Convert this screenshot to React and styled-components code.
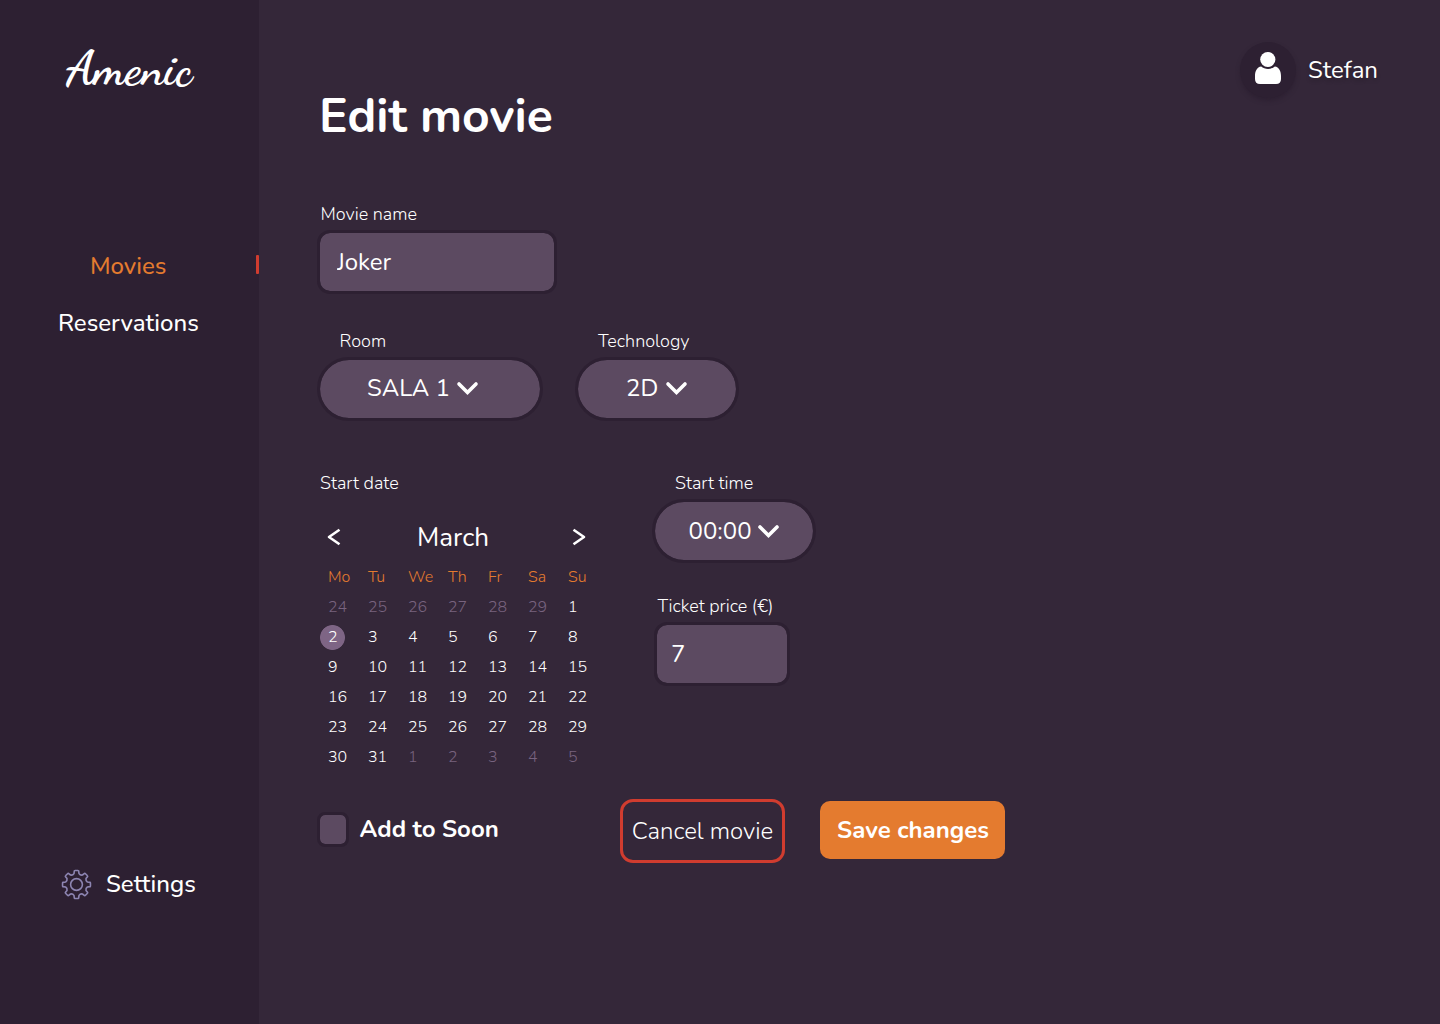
import React, { useState } from "react";
import styled, { createGlobalStyle } from "styled-components";

const colors = {
  background: "#342739",
  dark: "#2D2032",
  field: "#5C4A61",
  muted: "#78637F",
  selected: "#7E6585",
  orange: "#E47B2F",
  red: "#D03C2F",
  gear: "#8D85B2",
};

const GlobalStyle = createGlobalStyle`
  * { box-sizing: border-box; }
  body {
    margin: 0;
    background: ${colors.background};
    color: #fff;
    font-family: Nunito, Lato, "Open Sans", sans-serif;
  }
  button, input { font: inherit; color: inherit; }
`;

const Page = styled.div`
  display: grid;
  grid-template-columns: 259px 1fr;
  width: 1440px;
  height: 1024px;
  overflow: hidden;
`;

const Sidebar = styled.aside`
  display: flex;
  flex-direction: column;
  background: ${colors.dark};
`;

const Logo = styled.div`
  height: 58px;
  margin: 40px 0 0 66px;
  font: 700 48px/58px "Dancing Script", cursive;
  white-space: nowrap;
`;

const Nav = styled.nav`
  display: flex;
  flex-direction: column;
  gap: 25px;
  margin-top: 152px;
`;

const NavItem = styled.a`
  display: flex;
  align-items: center;
  justify-content: space-between;
  height: 32px;
  padding-left: ${(p) => p.$indent}px;
  color: ${(p) => (p.$active ? colors.orange : "#fff")};
  font-size: 24px;
  font-weight: 550;
  line-height: 32px;
`;

const ActiveMark = styled.i`
  width: 3px;
  height: 19px;
  margin-top: -3px;
  border-radius: 1px;
  background: ${colors.red};
`;

const SettingsLink = styled.a`
  display: flex;
  align-items: center;
  gap: 14px;
  height: 32px;
  margin: auto 0 124px 61px;
  font-size: 24px;
  font-weight: 550;
  line-height: 32px;
`;

const Main = styled.main`
  display: flex;
  flex-direction: column;
  padding: 42px 62px 0 58px;
`;

const Header = styled.header`
  display: flex;
  justify-content: space-between;
  align-items: flex-start;
  height: 107px;
  margin-bottom: 53px;
`;

const Title = styled.h1`
  margin: 41px 0 0 2px;
  font-size: 48px;
  font-weight: 700;
  line-height: 66px;
`;

const User = styled.div`
  display: flex;
  align-items: center;
  gap: 12px;
  height: 56px;
  font-size: 24px;
  line-height: 32px;
  text-shadow: 0 3px 4px rgba(0, 0, 0, 0.2);
`;

const Avatar = styled.div`
  display: flex;
  justify-content: center;
  width: 56px;
  height: 56px;
  padding-top: 9px;
  border-radius: 50%;
  background: ${colors.dark};
  box-shadow: 0 3px 4px ${colors.dark};
`;

const Row = styled.div`
  display: flex;
  align-items: flex-start;
  gap: ${(p) => p.$gap || 0}px;
  margin-bottom: ${(p) => p.$below || 0}px;
`;

const Field = styled.label`
  display: flex;
  flex-direction: column;
  gap: 4px;
  margin-left: ${(p) => p.$indent || 0}px;
`;

const Label = styled.span`
  padding-left: ${(p) => p.$indent}px;
  font-size: 18px;
  font-weight: 300;
  line-height: 24px;
`;

const Input = styled.input`
  width: ${(p) => p.$width}px;
  height: 64px;
  padding: 0 0 0 ${(p) => p.$inset}px;
  border: 3px solid ${colors.dark};
  border-radius: 13px;
  outline: none;
  background: ${colors.field};
  background-clip: padding-box;
  font-size: 24px;
`;

const Select = styled.button`
  display: flex;
  align-items: center;
  gap: ${(p) => p.$gap}px;
  width: ${(p) => p.$width}px;
  height: 64px;
  padding: 0 0 ${(p) => p.$lift || 0}px ${(p) => p.$inset}px;
  border: 3px solid ${colors.dark};
  border-radius: 32px;
  background: ${colors.field};
  background-clip: padding-box;
  font-size: 24px;
  line-height: 32px;
`;

const Schedule = styled.section`
  display: grid;
  grid-template-columns: 335px 1fr;
  height: 328px;
`;

const Calendar = styled.div`
  width: 280px;
  margin-left: 3px;
`;

const MonthBar = styled.div`
  display: flex;
  align-items: center;
  justify-content: space-between;
  width: 259px;
  height: 36px;
  margin: 24px 0 7px 7px;
`;

const Month = styled.span`
  padding: 2px 7px 0 0;
  font-size: 26px;
  line-height: 36px;
`;

const Days = styled.div`
  display: grid;
  grid-template-columns: repeat(7, 40px);
  grid-auto-rows: 30px;
`;

const Day = styled.span`
  width: 40px;
  padding-left: 8px;
  color: ${(p) => p.$color};
  font-size: 16px;
  font-weight: 300;
  line-height: 30px;
  background: ${(p) =>
    p.$selected
      ? `radial-gradient(circle 12.5px at 12.5px 15.5px, ${colors.selected} 12px, transparent 12.8px)`
      : "none"};
`;

const TimeColumn = styled.div`
  display: flex;
  flex-direction: column;
  gap: 31px;
`;

const Actions = styled.footer`
  display: flex;
  align-items: flex-start;
  height: 64px;
`;

const CheckLabel = styled.label`
  display: flex;
  align-items: flex-start;
  gap: 10.5px;
  width: 303px;
  height: 35px;
  margin-top: 13px;
  font-size: 24px;
  font-weight: 700;
  line-height: 34px;
`;

const Checkbox = styled.input`
  appearance: none;
  width: 32px;
  height: 35px;
  margin: 0;
  border: 3px solid ${colors.dark};
  border-radius: 8px;
  background: ${colors.field};
  background-clip: padding-box;
`;

const Button = styled.button`
  display: flex;
  align-items: center;
  justify-content: center;
  width: ${(p) => (p.$primary ? 185 : 165)}px;
  height: ${(p) => (p.$primary ? 58 : 64)}px;
  margin: ${(p) => (p.$primary ? "2px 0 0 35px" : "0")};
  padding: ${(p) => (p.$primary ? "0 0 0 1px" : "0")};
  border: ${(p) => (p.$primary ? "0" : `3px solid ${colors.red}`)};
  border-radius: ${(p) => (p.$primary ? 10 : 13)}px;
  background: ${(p) => (p.$primary ? colors.orange : "transparent")};
  font-size: 24px;
  font-weight: ${(p) => (p.$primary ? 700 : 300)};
  line-height: 32px;
  white-space: nowrap;
`;

const Chevron = () => (
  <svg width="23" height="16" viewBox="0 0 23 16" fill="none">
    <path d="M3 4 L11.5 12.5 L20 4" stroke="#fff" strokeWidth="3.6" strokeLinecap="round" />
  </svg>
);

const Arrow = ({ next }) => (
  <svg width="14" height="18" viewBox="0 0 14 18" fill="none">
    <path
      d={next ? "M1.5 1.8 L12 9 L1.5 16.2" : "M12.5 1.8 L2 9 L12.5 16.2"}
      stroke="#fff"
      strokeWidth="2.6"
      strokeLinejoin="round"
    />
  </svg>
);

const Person = () => (
  <svg width="26" height="34" viewBox="0 0 26 34" fill="#fff">
    <ellipse cx="12.8" cy="8.5" rx="7.6" ry="7.6" />
    <path d="M6.2 15.6 C9.5 18.7 16.5 18.7 19.8 15.6 C24 16 26 20.5 26 25 V28 Q26 33 21 33 H5 Q0 33 0 28 V25 C0 20.5 2 16 6.2 15.6Z" />
  </svg>
);

const point = (radius, degrees) => {
  const a = (degrees * Math.PI) / 180;
  return `${(15.5 + radius * Math.sin(a)).toFixed(2)} ${(15.5 - radius * Math.cos(a)).toFixed(2)}`;
};

const gearPath =
  Array.from({ length: 8 }, (_, i) => {
    const a = i * 45;
    return `${i ? "L" : "M"}${point(11.2, a - 13)} L${point(13.8, a - 9)} Q${point(14.1, a - 7)} ${point(14, a - 5)} L${point(14, a + 5)} Q${point(14.1, a + 7)} ${point(13.8, a + 9)} L${point(11.2, a + 13)} Q${point(9.8, a + 22.5)} ${point(11.2, a + 32)}`;
  }).join(" ") + "Z";

const Gear = () => (
  <svg width="31" height="31" viewBox="0 0 31 31" fill="none" stroke={colors.gear} strokeWidth="1.6" strokeLinejoin="round">
    <path d={gearPath} />
    <circle cx="15.5" cy="15.5" r="5.9" />
  </svg>
);

const weekdays = ["Mo", "Tu", "We", "Th", "Fr", "Sa", "Su"];
const days = [
  ...[24, 25, 26, 27, 28, 29].map((n) => ({ n, outside: true })),
  ...Array.from({ length: 31 }, (_, i) => ({ n: i + 1 })),
  ...[1, 2, 3, 4, 5].map((n) => ({ n, outside: true })),
];

export default function App() {
  const [selected, setSelected] = useState(2);
  return (
    <>
      <GlobalStyle />
      <Page>
        <Sidebar>
          <Logo>Amenic</Logo>
          <Nav>
            <NavItem $active $indent={90}>
              Movies
              <ActiveMark />
            </NavItem>
            <NavItem $indent={58}>Reservations</NavItem>
          </Nav>
          <SettingsLink>
            <Gear />
            Settings
          </SettingsLink>
        </Sidebar>
        <Main>
          <Header>
            <Title>Edit movie</Title>
            <User>
              <Avatar>
                <Person />
              </Avatar>
              Stefan
            </User>
          </Header>
          <Row $below={35}>
            <Field>
              <Label $indent={3.5}>Movie name</Label>
              <Input $width={240} $inset={17} defaultValue="Joker" />
            </Field>
          </Row>
          <Row $gap={32} $below={50}>
            <Field>
              <Label $indent={22.5}>Room</Label>
              <Select $width={226} $inset={47} $gap={6} $lift={2}>
                SALA 1<Chevron />
              </Select>
            </Field>
            <Field>
              <Label $indent={23}>Technology</Label>
              <Select $width={164} $inset={48} $gap={7} $lift={2}>
                2D
                <Chevron />
              </Select>
            </Field>
          </Row>
          <Schedule>
            <Calendar>
              <Label as="div" $indent={0}>
                Start date
              </Label>
              <MonthBar>
                <Arrow />
                <Month>March</Month>
                <Arrow next />
              </MonthBar>
              <Days>
                {weekdays.map((d) => (
                  <Day key={d} $color={colors.orange}>
                    {d}
                  </Day>
                ))}
                {days.map(({ n, outside }, i) => (
                  <Day
                    key={i}
                    $color={outside ? colors.muted : "#fff"}
                    $selected={!outside && n === selected}
                    onClick={() => !outside && setSelected(n)}
                  >
                    {n}
                  </Day>
                ))}
              </Days>
            </Calendar>
            <TimeColumn>
              <Field>
                <Label $indent={23}>Start time</Label>
                <Select $width={164} $inset={33.5} $gap={5.5}>
                  00:00
                  <Chevron />
                </Select>
              </Field>
              <Field $indent={2}>
                <Label $indent={3.5}>Ticket price (€)</Label>
                <Input $width={136} $inset={14} defaultValue="7" />
              </Field>
            </TimeColumn>
          </Schedule>
          <Actions>
            <CheckLabel>
              <Checkbox type="checkbox" />
              Add to Soon
            </CheckLabel>
            <Button>Cancel movie</Button>
            <Button $primary>Save changes</Button>
          </Actions>
        </Main>
      </Page>
    </>
  );
}
